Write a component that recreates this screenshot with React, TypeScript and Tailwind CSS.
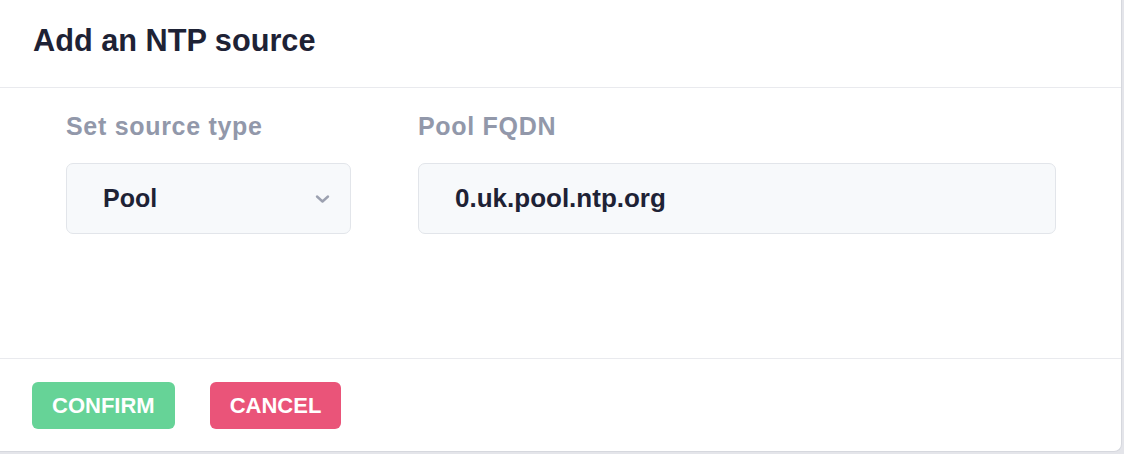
import React, { useState } from 'react';

const fontStack = { fontFamily: '"Liberation Sans", Arial, sans-serif' };

const Chevron: React.FC = () => (
  <svg width="15" height="10" viewBox="0 0 15 10" fill="none" className="shrink-0">
    <path d="M2 2.5l5.5 5 5.5-5" stroke="#9ca1b0" strokeWidth="2.4" strokeLinecap="round" strokeLinejoin="round" />
  </svg>
);

const App: React.FC = () => {
  const [sourceType] = useState('Pool');
  const [fqdn, setFqdn] = useState('0.uk.pool.ntp.org');

  return (
    <div className="w-[1124px] h-[454px] bg-[#e4e5ea] pr-[2px] pb-[2px]" style={fontStack}>
      <div className="h-full w-full bg-white border-r border-b border-[#d6d8de] rounded-br-[8px] flex flex-col">
        <div className="h-[88px] border-b border-[#e9eaee] flex items-center pl-[33px] pb-[4px]">
          <h2 className="text-[30.7px] font-bold text-[#1e2235] leading-none">Add an NTP source</h2>
        </div>

        <div className="flex-1 flex gap-[67px] pl-[66px] pt-[26px] border-b border-[#e9eaee]">
          <div className="flex flex-col w-[285px]">
            <label className="text-[25px] font-bold text-[#9298aa] leading-none tracking-[0.7px]">Set source type</label>
            <div className="mt-[24px] h-[71px] bg-[#f7f9fb] border border-[#e2e5ea] rounded-[7px] flex items-center justify-between pl-[36px] pr-[20px]">
              <span className="text-[25px] font-bold text-[#1e2235]">{sourceType}</span>
              <Chevron />
            </div>
          </div>

          <div className="flex flex-col w-[638px]">
            <label className="text-[25px] font-bold text-[#9298aa] leading-none tracking-[0.7px]">Pool FQDN</label>
            <input
              value={fqdn}
              onChange={(e) => setFqdn(e.target.value)}
              className="mt-[24px] h-[71px] bg-[#f7f9fb] border border-[#e2e5ea] rounded-[7px] pl-[36px] text-[26px] font-bold text-[#1e2235] focus:outline-none"
            />
          </div>
        </div>

        <div className="h-[92px] flex items-start gap-[35px] pl-[32px] pt-[23px]">
          <button className="h-[47px] px-[20px] rounded-[6px] bg-[#66d397] text-white text-[22px] font-bold">CONFIRM</button>
          <button className="h-[47px] px-[20px] rounded-[6px] bg-[#ea5479] text-white text-[22px] font-bold">CANCEL</button>
        </div>
      </div>
    </div>
  );
};

export default App;
